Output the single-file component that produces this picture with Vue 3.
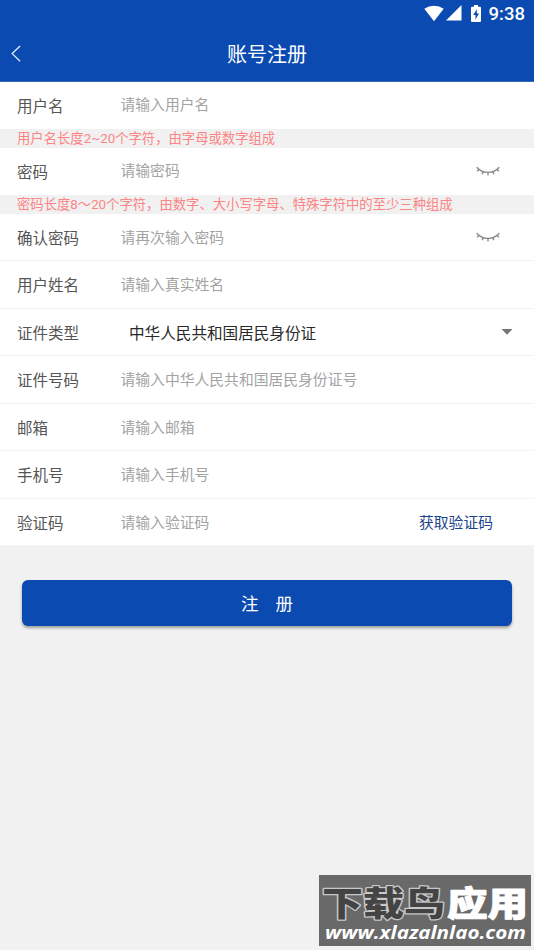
<script setup>
const rows = [
  { id: 'user', label: '用户名', hint: '请输入用户名', note: '用户名长度2~20个字符，由字母或数字组成' },
  { id: 'pass', label: '密码', hint: '请输密码', eye: true, note: '密码长度8～20个字符，由数字、大小写字母、特殊字符中的至少三种组成' },
  { id: 'confirm', label: '确认密码', hint: '请再次输入密码', eye: true },
  { id: 'name', label: '用户姓名', hint: '请输入真实姓名' },
  { id: 'type', label: '证件类型', value: '中华人民共和国居民身份证' },
  { id: 'number', label: '证件号码', hint: '请输入中华人民共和国居民身份证号' },
  { id: 'mail', label: '邮箱', hint: '请输入邮箱' },
  { id: 'phone', label: '手机号', hint: '请输入手机号' },
  { id: 'code', label: '验证码', hint: '请输入验证码', action: '获取验证码' },
]
</script>

<template>
  <div class="screen">
    <header class="header">
      <div class="status">
        <svg class="wifi" width="20" height="17" viewBox="0 0 20 17"><path d="M10 16.2 0.3 3.8Q4.6 0.8 10 0.8T19.7 3.8Z" fill="#fff" /></svg>
        <svg class="signal" width="16" height="16" viewBox="0 0 16 16"><path d="M15.5 0V15.6H0Z" fill="#fff" /></svg>
        <svg class="battery" width="10" height="17" viewBox="0 0 10 17">
          <path d="M3 0H7V1.7H9Q10 1.7 10 2.7V16Q10 17 9 17H1Q0 17 0 16V2.7Q0 1.7 1 1.7H3Z" fill="#fff" />
          <path d="M5.8 4.2 2.2 10H4.5V14.5L8 8.6H5.8Z" fill="#0b4bb1" />
        </svg>
        <span class="time">9:38</span>
      </div>
      <div class="bar">
        <svg class="back" width="10" height="17" viewBox="0 0 10 17"><path d="M9.1 1 1.2 8.6 9.1 16.2" fill="none" stroke="#e4efff" stroke-width="1.3" /></svg>
        <h1 class="title">账号注册</h1>
      </div>
    </header>

    <main>
      <template v-for="r in rows" :key="r.id">
        <div class="row" :class="{ noted: r.note, after: r.id === 'confirm' }">
          <span class="label">{{ r.label }}</span>
          <span v-if="r.value" class="value">{{ r.value }}</span>
          <span v-else class="hint">{{ r.hint }}</span>
          <svg v-if="r.eye" class="eye" width="24" height="10" viewBox="0 0 24 10">
            <path d="M0.7 1.2Q5.5 6.4 12 6.4T23.3 1.2M3 3.2 1.1 5.2M7.2 5.4 6.1 8.2M12 6.2V9.4M16.8 5.4 17.9 8.2M21 3.2 22.9 5.2" fill="none" stroke="#858585" stroke-width="1.3" />
          </svg>
          <svg v-if="r.value" class="caret" width="12" height="6" viewBox="0 0 12 6"><path d="M0.5 0H11.5L6 5.7Z" fill="#757575" /></svg>
          <span v-if="r.action" class="action">{{ r.action }}</span>
        </div>
        <div v-if="r.note" class="note">{{ r.note }}</div>
      </template>
      <button class="submit"><span>注</span><span>册</span></button>
    </main>

    <div class="mark">
      <svg width="212" height="71" viewBox="0 0 212 71">
        <g class="mark-name">
          <text class="dark" x="3" y="41" textLength="123" lengthAdjust="spacingAndGlyphs">下载鸟</text>
          <text class="light" x="128" y="41" textLength="81" lengthAdjust="spacingAndGlyphs">应用</text>
        </g>
        <text class="mark-url" x="6" y="64" textLength="201" lengthAdjust="spacingAndGlyphs">www.xlazalnlao.com</text>
      </svg>
    </div>
  </div>
</template>

<style>
body {
  background: #f1f1f1;
}
</style>

<style scoped>
.screen {
  position: relative;
  width: 534px;
  height: 950px;
  overflow: hidden;
  background: #f1f1f1;
  font-family: Roboto, "Noto Sans CJK SC", sans-serif;
}
.header {
  box-sizing: border-box;
  height: 82px;
  background: #0b4bb1;
  border-bottom: 1px solid #3269bd;
  color: #fff;
}
.status {
  display: flex;
  justify-content: flex-end;
  align-items: center;
  height: 26px;
  padding-right: 9px;
}
.signal {
  margin-left: 2px;
}
.battery {
  margin-left: 9px;
}
.time {
  margin-left: 8px;
  padding-top: 2px;
  font-size: 18.5px;
  font-weight: 500;
  line-height: 24px;
}
.bar {
  display: grid;
  grid-template-columns: 40px 1fr 40px;
  align-items: center;
  height: 55px;
}
.back {
  margin-left: 10.5px;
}
.title {
  margin: 0;
  padding-top: 2px;
  font-size: 20px;
  font-weight: 400;
  line-height: 30px;
  text-align: center;
}
.row {
  box-sizing: border-box;
  display: flex;
  align-items: center;
  height: 47.5px;
  padding-left: 17px;
  background: #fff;
  border-bottom: 1px solid #f3f3f3;
}
.row.noted {
  height: 46.5px;
  border-bottom: 0;
}
.row.after {
  height: 47px;
}
.label {
  width: 103.5px;
  padding-top: 4px;
  font-size: 15.5px;
  line-height: 24px;
  color: #555;
}
.hint {
  flex: 1;
  padding-top: 1.5px;
  font-size: 14.8px;
  line-height: 24px;
  color: #a3a3a3;
}
.noted .hint {
  padding-top: 0;
}
.value {
  flex: 1;
  padding: 4px 0 0 8.5px;
  font-size: 15.6px;
  line-height: 24px;
  color: #2a2a2a;
}
.eye {
  margin-right: 34px;
}
.caret {
  margin-right: 21px;
}
.action {
  margin-right: 41px;
  padding-top: 1.5px;
  font-size: 14.8px;
  line-height: 24px;
  color: #1b438b;
}
.note {
  height: 19.5px;
  padding-left: 17px;
  font-size: 13.33px;
  line-height: 20px;
  color: #fb8585;
  white-space: nowrap;
}
.submit {
  display: flex;
  justify-content: center;
  align-items: center;
  gap: 17px;
  width: 490px;
  height: 46px;
  margin: 34px 0 0 22px;
  padding: 0 0 2px;
  border: 0;
  border-radius: 6px;
  background: #0b4bb1;
  box-shadow: 0 2px 3px rgba(0, 0, 0, 0.35);
  color: #fff;
  font-family: inherit;
  font-size: 17.5px;
}
.mark {
  position: absolute;
  left: 319px;
  top: 875px;
  width: 212px;
  height: 71px;
  background: #696969;
}
.mark svg {
  display: block;
}
.mark-name {
  font-family: "Noto Sans CJK SC", sans-serif;
  font-size: 34px;
  font-weight: 900;
  paint-order: stroke;
  stroke-linejoin: round;
}
.dark {
  fill: #444;
  stroke: #c8c8c8;
  stroke-width: 2.5px;
}
.light {
  fill: #fff;
  stroke: #fff;
  stroke-width: 1px;
}
.mark-url {
  font-family: "Open Sans", sans-serif;
  font-size: 18px;
  font-weight: 700;
  font-style: italic;
  fill: #fff;
}
</style>
